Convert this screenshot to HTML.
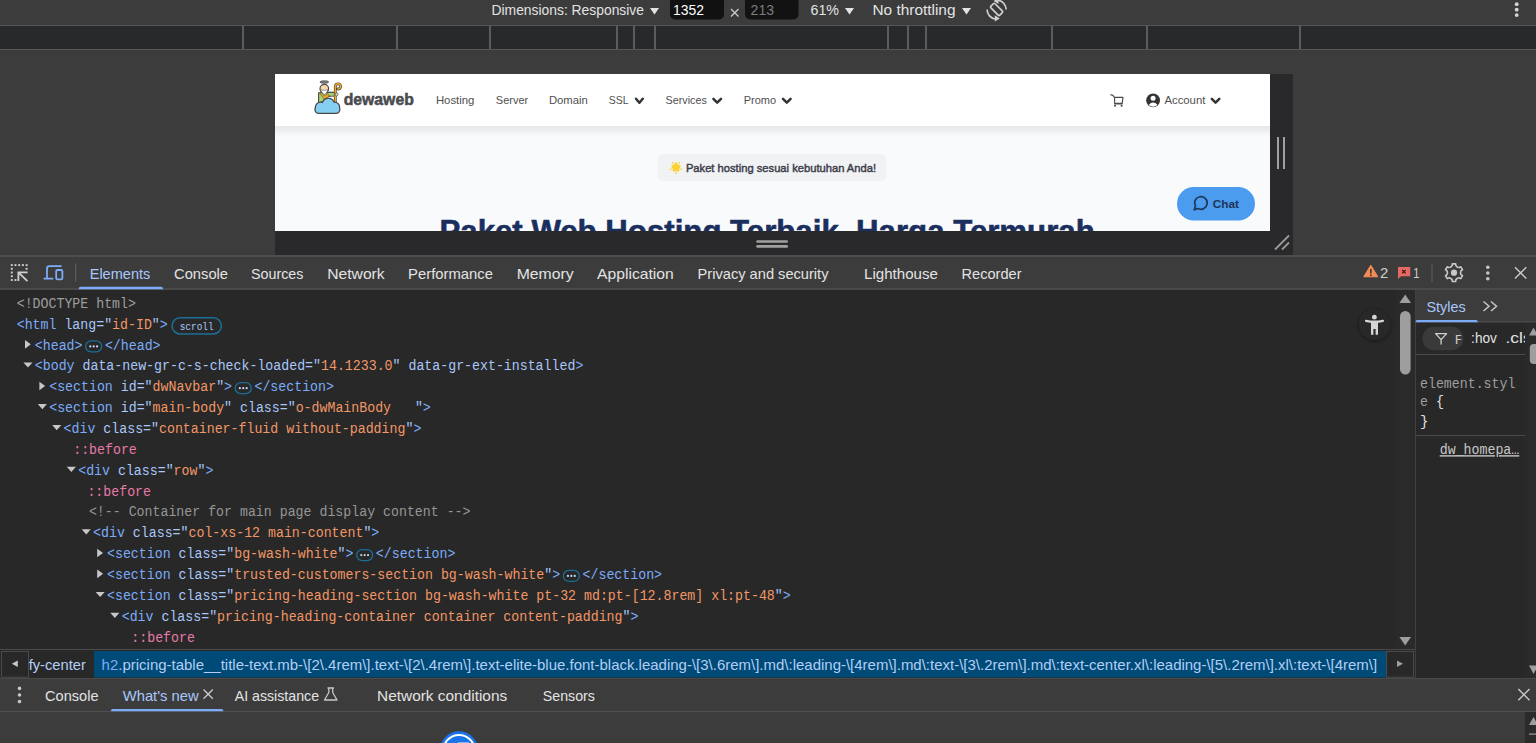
<!DOCTYPE html>
<html><head><meta charset="utf-8"><title>DevTools</title>
<style>
html,body{margin:0;padding:0;background:#3c3c3c;width:1536px;height:743px;overflow:hidden}
svg{display:block}
.S{font-family:"Liberation Sans", sans-serif}
.M{font-family:"Liberation Mono", monospace}
</style></head><body>
<svg width="1536" height="743" viewBox="0 0 1536 743">
<rect x="0" y="0" width="1536" height="25" fill="#3c3c3c" rx="0" />
<rect x="0" y="25" width="1536" height="1" fill="#565656" rx="0" />
<text class="S" x="491.5" y="15.2" font-size="14.5" fill="#e3e3e3" textLength="152.5" lengthAdjust="spacingAndGlyphs" >Dimensions: Responsive</text>
<path d="M650 8 L659 8 L654.5 14.6 Z" fill="#e3e3e3"/>
<rect x="670" y="-6" width="54" height="25.5" fill="#111111" rx="5" />
<text class="S" x="673" y="15.2" font-size="14.5" fill="#ffffff" textLength="31" lengthAdjust="spacingAndGlyphs" >1352</text>
<path d="M731 9 L738.5 16.5 M738.5 9 L731 16.5" stroke="#c8c8c8" stroke-width="1.4"/>
<rect x="745" y="-6" width="53.5" height="25.5" fill="#121212" rx="5" />
<text class="S" x="750.6" y="15.2" font-size="14.5" fill="#7d7d7d" textLength="23.5" lengthAdjust="spacingAndGlyphs" >213</text>
<text class="S" x="810.5" y="15.2" font-size="14.5" fill="#e3e3e3" textLength="28.5" lengthAdjust="spacingAndGlyphs" >61%</text>
<path d="M845 8 L854 8 L849.5 14.6 Z" fill="#e3e3e3"/>
<text class="S" x="872.5" y="15.2" font-size="14.5" fill="#e3e3e3" textLength="83" lengthAdjust="spacingAndGlyphs" >No throttling</text>
<path d="M962 8 L971 8 L966.5 14.6 Z" fill="#e3e3e3"/>
<g fill="none" stroke="#d0d0d0" stroke-width="1.7"><rect x="-2.9" y="-6.3" width="5.8" height="12.6" rx="1.2" transform="translate(996.6,9.4) rotate(-45)"/><path d="M998.2 0.2 A9.5 9.5 0 0 1 1006.1 9.6"/><path d="M987.1 9.6 A9.5 9.5 0 0 0 995.4 19"/></g><path d="M993.6 1.0 L998.4 -2.2 L998.6 4.0 Z M999.8 18.4 L994.8 15.2 L994.8 21.4 Z" fill="#d0d0d0"/>
<circle cx="1516.7" cy="4.2" r="1.9" fill="#d6d6d6"/>
<circle cx="1516.7" cy="9.7" r="1.9" fill="#d6d6d6"/>
<circle cx="1516.7" cy="15.1" r="1.9" fill="#d6d6d6"/>
<rect x="0" y="26" width="1536" height="23" fill="#28292b" rx="0" />
<rect x="0" y="49" width="1536" height="1" fill="#565656" rx="0" />
<rect x="242" y="26" width="2" height="23" fill="#5c5c5c" rx="0" />
<rect x="396" y="26" width="2" height="23" fill="#5c5c5c" rx="0" />
<rect x="489" y="26" width="2" height="23" fill="#5c5c5c" rx="0" />
<rect x="616" y="26" width="2" height="23" fill="#5c5c5c" rx="0" />
<rect x="633" y="26" width="2" height="23" fill="#5c5c5c" rx="0" />
<rect x="654" y="26" width="2" height="23" fill="#5c5c5c" rx="0" />
<rect x="887" y="26" width="2" height="23" fill="#5c5c5c" rx="0" />
<rect x="907" y="26" width="2" height="23" fill="#5c5c5c" rx="0" />
<rect x="925" y="26" width="2" height="23" fill="#5c5c5c" rx="0" />
<rect x="1051" y="26" width="2" height="23" fill="#5c5c5c" rx="0" />
<rect x="1146" y="26" width="2" height="23" fill="#5c5c5c" rx="0" />
<rect x="1299" y="26" width="2" height="23" fill="#5c5c5c" rx="0" />
<rect x="0" y="50" width="1536" height="206" fill="#3c3c3c" rx="0" />
<rect x="1270" y="74" width="23" height="181" fill="#29292b" rx="0" />
<rect x="275" y="231" width="1018" height="24" fill="#29292b" rx="0" />
<rect x="1277" y="137" width="2" height="32" fill="#a0a0a0" rx="0" />
<rect x="1283" y="137" width="2" height="32" fill="#a0a0a0" rx="0" />
<rect x="756.2" y="240.2" width="31.8" height="2.6" fill="#a0a0a0" rx="1.3" />
<rect x="756.2" y="245.1" width="31.8" height="2.6" fill="#a0a0a0" rx="1.3" />
<path d="M1275 249.5 L1289 235.5 M1282 249.5 L1289 242.5" stroke="#9a9a9a" stroke-width="1.8"/>
<svg x="275" y="74" width="995" height="157" overflow="hidden"><g transform="translate(-275,-74)">
<rect x="275" y="74" width="995" height="157" fill="#f9fafb"/>
<rect x="275" y="74" width="995" height="52" fill="#ffffff"/>
<defs><linearGradient id="nsh" x1="0" y1="0" x2="0" y2="1"><stop offset="0" stop-color="#e6e7e9"/><stop offset="0.25" stop-color="#eaebed"/><stop offset="1" stop-color="#f8f9fb"/></linearGradient></defs>
<rect x="275" y="126" width="995" height="10" fill="url(#nsh)"/>
<g stroke-linejoin="round"><ellipse cx="324.3" cy="82" rx="4.4" ry="1.25" fill="#7a7a7a" stroke="#5a5a5a" stroke-width="0.8"/><path d="M318.6 92.8 L327.5 92.2 L334.5 92.4 L334.5 96 L327 96.4 L323 101.5 L318.6 103 Z" fill="#a6d56a" stroke="#4a4a4a" stroke-width="1.1"/><path d="M335.3 104.6 V86.4 a2.6 2.6 0 1 1 2.6 2.6" fill="none" stroke="#4a4a4a" stroke-width="2.8" stroke-linecap="round"/><path d="M335.3 104.6 V86.4 a2.6 2.6 0 1 1 2.6 2.6" fill="none" stroke="#f2a81d" stroke-width="1.4" stroke-linecap="round"/><circle cx="336.6" cy="94.4" r="1.5" fill="#f7d9b0" stroke="#4a4a4a" stroke-width="0.7"/><path d="M319.8 93 L324.5 99.5 L329.5 96 L327.6 93.6 L324.4 96 L321.4 92.6 Z" fill="#f2a81d" stroke="#4a4a4a" stroke-width="0.6"/><circle cx="324.3" cy="88.7" r="4.3" fill="#f7d9b0" stroke="#4a4a4a" stroke-width="1.2"/><path d="M320.6 89.6 Q324.3 99 328 89.6 Q324.3 91.2 320.6 89.6 Z" fill="#ffffff" stroke="#5a5a5a" stroke-width="0.6"/></g>
<g fill="#4a4a4a" stroke="#4a4a4a" stroke-width="2.6"><circle cx="320.6" cy="107.4" r="4.6"/><circle cx="328.3" cy="104.4" r="5.6"/><circle cx="334.6" cy="107.2" r="4.4"/><rect x="315.6" y="106.5" width="23.6" height="6.2" rx="3.1"/></g>
<g fill="#85cff3"><circle cx="320.6" cy="107.4" r="4.6"/><circle cx="328.3" cy="104.4" r="5.6"/><circle cx="334.6" cy="107.2" r="4.4"/><rect x="315.6" y="106.5" width="23.6" height="6.2" rx="3.1"/></g>
<text stroke="#4a4b4f" stroke-width="0.55" class="S" x="343.70" y="105.20" font-size="16.5" fill="#4a4b4f" font-weight="700" textLength="70.10" lengthAdjust="spacingAndGlyphs" style="white-space:pre">dewaweb</text>
<text class="S" x="435.90" y="103.90" font-size="11.5" fill="#505050" textLength="38.50" lengthAdjust="spacingAndGlyphs" style="white-space:pre">Hosting</text>
<text class="S" x="495.80" y="103.90" font-size="11.5" fill="#505050" textLength="32.40" lengthAdjust="spacingAndGlyphs" style="white-space:pre">Server</text>
<text class="S" x="548.90" y="103.90" font-size="11.5" fill="#505050" textLength="39.00" lengthAdjust="spacingAndGlyphs" style="white-space:pre">Domain</text>
<text class="S" x="608.70" y="103.90" font-size="11.5" fill="#505050" textLength="19.80" lengthAdjust="spacingAndGlyphs" style="white-space:pre">SSL</text>
<text class="S" x="665.60" y="103.90" font-size="11.5" fill="#505050" textLength="41.20" lengthAdjust="spacingAndGlyphs" style="white-space:pre">Services</text>
<text class="S" x="743.70" y="103.90" font-size="11.5" fill="#505050" textLength="32.40" lengthAdjust="spacingAndGlyphs" style="white-space:pre">Promo</text>
<path d="M636.00 98.80 L639.40 102.70 L642.80 98.80" fill="none" stroke="#333" stroke-width="2.5" stroke-linecap="round" stroke-linejoin="round"/>
<path d="M713.40 98.80 L717.20 102.70 L721.00 98.80" fill="none" stroke="#333" stroke-width="2.5" stroke-linecap="round" stroke-linejoin="round"/>
<path d="M783.00 98.80 L786.80 102.70 L790.60 98.80" fill="none" stroke="#333" stroke-width="2.5" stroke-linecap="round" stroke-linejoin="round"/>
<g fill="none" stroke="#4a4a4a" stroke-width="1.15" stroke-linejoin="round" stroke-linecap="round"><path d="M1110.6 94.8 l2.3 0.6 l1.6 2 h8.5 l-0.8 5.8 h-7.2 M1114.5 97.4 l0.2 6.4 h7.6"/></g><circle cx="1115" cy="105.7" r="1.05" fill="#4a4a4a"/><circle cx="1121.6" cy="105.7" r="1.05" fill="#4a4a4a"/>
<circle cx="1153.1" cy="100.3" r="6.9" fill="#333333"/><circle cx="1153.1" cy="98.3" r="2.5" fill="#ffffff"/><path d="M1148.6 104.9 q4.5 -4.8 9 0 q-4.5 3.6 -9 0 Z" fill="#ffffff"/>
<text class="S" x="1164.40" y="104.00" font-size="11.5" fill="#505050" textLength="41.00" lengthAdjust="spacingAndGlyphs" style="white-space:pre">Account</text>
<path d="M1211.80 98.80 L1215.55 102.70 L1219.30 98.80" fill="none" stroke="#333" stroke-width="2.5" stroke-linecap="round" stroke-linejoin="round"/>
<rect x="657.8" y="154.3" width="228.5" height="26.6" rx="5" fill="#f1f2f4"/>
<polygon points="676.00,163.00 677.76,164.97 680.18,166.04 678.85,168.33 678.59,170.96 676.00,170.40 673.41,170.96 673.15,168.33 671.82,166.04 674.24,164.97" fill="#fcd232" stroke="#fcd232" stroke-width="1.2" stroke-linejoin="round"/>
<circle cx="679.29" cy="162.87" r="0.9" fill="#fcd232"/>
<circle cx="681.33" cy="169.13" r="0.9" fill="#fcd232"/>
<circle cx="676.00" cy="173.00" r="0.9" fill="#fcd232"/>
<circle cx="670.67" cy="169.13" r="0.9" fill="#fcd232"/>
<circle cx="672.71" cy="162.87" r="0.9" fill="#fcd232"/>
<text stroke="#3b3d4a" stroke-width="0.45" class="S" x="685.90" y="171.70" font-size="11.8" fill="#3b3d4a" textLength="190.20" lengthAdjust="spacingAndGlyphs" style="white-space:pre">Paket hosting sesuai kebutuhan Anda!</text>
<rect x="1177" y="187" width="78" height="33.5" rx="16.75" fill="#4b9bef"/>
<g fill="none" stroke="#1d3557" stroke-width="1.7" stroke-linejoin="round"><path d="M1194.2 209.8 l1.3 -3.6 a6.3 6.3 0 1 1 2.6 2.4 Z"/></g>
<text class="S" x="1212.80" y="208.20" font-size="11.5" fill="#1d3557" font-weight="700" textLength="26.20" lengthAdjust="spacingAndGlyphs" style="white-space:pre">Chat</text>
<text stroke="#1b2f5e" stroke-width="0.6" class="S" x="439.50" y="242.00" font-size="31" fill="#1b2f5e" font-weight="700" textLength="655.20" lengthAdjust="spacingAndGlyphs" style="white-space:pre">Paket Web Hosting Terbaik, Harga Termurah</text>
</g></svg>
<rect x="0" y="255" width="1536" height="2" fill="#4d4d4d" rx="0" />
<rect x="0" y="257" width="1536" height="31" fill="#3c3c3c" rx="0" />
<rect x="0" y="288" width="1536" height="2" fill="#4a4a4a" rx="0" />
<g fill="#cfcfcf"><rect x="10.85" y="264.15" width="1.9" height="1.9"/><rect x="14.55" y="264.15" width="1.9" height="1.9"/><rect x="18.25" y="264.15" width="1.9" height="1.9"/><rect x="21.95" y="264.15" width="1.9" height="1.9"/><rect x="25.65" y="264.15" width="1.9" height="1.9"/><rect x="10.85" y="267.85" width="1.9" height="1.9"/><rect x="10.85" y="271.55" width="1.9" height="1.9"/><rect x="10.85" y="275.25" width="1.9" height="1.9"/><rect x="10.85" y="279.05" width="1.9" height="1.9"/><rect x="14.55" y="279.05" width="1.9" height="1.9"/><rect x="25.65" y="267.85" width="1.9" height="1.9"/></g>
<path d="M18.4 281 V272.3 H27.6 M18.9 272.8 L27.4 281.2" fill="none" stroke="#cfcfcf" stroke-width="1.8"/>
<g fill="none" stroke="#7cacf8" stroke-width="1.8"><path d="M43.6 278.6 H53.2 M47 278.6 V268.6 a2.4 2.4 0 0 1 2.4 -2.4 H61.6"/><rect x="56.2" y="270" width="6.2" height="9.3" rx="1.3"/></g>
<rect x="75" y="263.5" width="1.2" height="18" fill="#5a5a5a"/>
<text class="S" x="89.70" y="278.80" font-size="14.5" fill="#a8c7fa" textLength="60.60" lengthAdjust="spacingAndGlyphs" style="white-space:pre" >Elements</text>
<text class="S" x="174.10" y="278.80" font-size="14.5" fill="#e3e3e3" textLength="53.90" lengthAdjust="spacingAndGlyphs" style="white-space:pre" >Console</text>
<text class="S" x="251.10" y="278.80" font-size="14.5" fill="#e3e3e3" textLength="52.30" lengthAdjust="spacingAndGlyphs" style="white-space:pre" >Sources</text>
<text class="S" x="327.20" y="278.80" font-size="14.5" fill="#e3e3e3" textLength="57.50" lengthAdjust="spacingAndGlyphs" style="white-space:pre" >Network</text>
<text class="S" x="408.10" y="278.80" font-size="14.5" fill="#e3e3e3" textLength="84.80" lengthAdjust="spacingAndGlyphs" style="white-space:pre" >Performance</text>
<text class="S" x="516.70" y="278.80" font-size="14.5" fill="#e3e3e3" textLength="57.00" lengthAdjust="spacingAndGlyphs" style="white-space:pre" >Memory</text>
<text class="S" x="597.10" y="278.80" font-size="14.5" fill="#e3e3e3" textLength="76.70" lengthAdjust="spacingAndGlyphs" style="white-space:pre" >Application</text>
<text class="S" x="697.60" y="278.80" font-size="14.5" fill="#e3e3e3" textLength="130.90" lengthAdjust="spacingAndGlyphs" style="white-space:pre" >Privacy and security</text>
<text class="S" x="864.10" y="278.80" font-size="14.5" fill="#e3e3e3" textLength="73.70" lengthAdjust="spacingAndGlyphs" style="white-space:pre" >Lighthouse</text>
<text class="S" x="961.60" y="278.80" font-size="14.5" fill="#e3e3e3" textLength="59.90" lengthAdjust="spacingAndGlyphs" style="white-space:pre" >Recorder</text>
<path d="M78.7 289.3 v-0.6 a2 2 0 0 1 2 -2 h80.3 a2 2 0 0 1 2 2 v0.6 Z" fill="#7cacf8"/>
<path d="M1370.8 265.2 L1377.9 276.8 L1363.7 276.8 Z" fill="#f28b54" stroke="#f28b54" stroke-width="1" stroke-linejoin="round"/>
<rect x="1370" y="269" width="1.6" height="4.6" fill="#3c3c3c"/><rect x="1370" y="274.4" width="1.6" height="1.6" fill="#3c3c3c"/>
<text class="S" x="1380.10" y="277.60" font-size="14" fill="#cfcfcf" textLength="8.30" lengthAdjust="spacingAndGlyphs" style="white-space:pre" >2</text>
<path d="M1398 267 h12.2 v9.2 h-9 l-3.2 2.6 Z" fill="#e46962"/>
<path d="M1402.2 270 l3.4 3.4 M1405.6 270 l-3.4 3.4" stroke="#3c1614" stroke-width="1.2"/>
<text class="S" x="1413.30" y="278.00" font-size="14" fill="#cfcfcf" textLength="6.20" lengthAdjust="spacingAndGlyphs" style="white-space:pre" >1</text>
<rect x="1431.4" y="264" width="1.2" height="18" fill="#5a5a5a"/>
<polygon points="1451.11,266.77 1452.21,265.52 1452.28,263.87 1455.72,263.87 1455.79,265.52 1456.89,266.77 1457.69,267.23 1459.32,267.56 1460.79,266.80 1462.51,269.77 1461.11,270.66 1460.58,272.24 1460.58,273.16 1461.11,274.74 1462.51,275.63 1460.79,278.60 1459.32,277.84 1457.69,278.17 1456.89,278.63 1455.79,279.88 1455.72,281.53 1452.28,281.53 1452.21,279.88 1451.11,278.63 1450.31,278.17 1448.68,277.84 1447.21,278.60 1445.49,275.63 1446.89,274.74 1447.42,273.16 1447.42,272.24 1446.89,270.66 1445.49,269.77 1447.21,266.80 1448.68,267.56 1450.31,267.23" fill="none" stroke="#c7c7c7" stroke-width="1.6" stroke-linejoin="round"/>
<circle cx="1454" cy="272.7" r="3.1" fill="#c7c7c7"/>
<circle cx="1487.8" cy="267.2" r="1.8" fill="#c7c7c7"/>
<circle cx="1487.8" cy="273.0" r="1.8" fill="#c7c7c7"/>
<circle cx="1487.8" cy="278.8" r="1.8" fill="#c7c7c7"/>
<path d="M1515 267.2 L1526.3 278.5 M1526.3 267.2 L1515 278.5" stroke="#c7c7c7" stroke-width="1.5"/>
<rect x="0" y="290" width="1415" height="360" fill="#282828" rx="0" />
<text class="M" x="16.70" y="307.80" font-size="14" textLength="119.25" lengthAdjust="spacingAndGlyphs" style="white-space:pre"><tspan fill="#9e9e9e">&lt;!DOCTYPE html&gt;</tspan></text>
<text class="M" x="16.70" y="328.67" font-size="14" textLength="151.05" lengthAdjust="spacingAndGlyphs" style="white-space:pre"><tspan fill="#7cacf8">&lt;html</tspan><tspan fill="#a8c7fa"> lang</tspan><tspan fill="#a8c7fa">=&quot;</tspan><tspan fill="#f29766">id-ID</tspan><tspan fill="#a8c7fa">&quot;</tspan><tspan fill="#7cacf8">&gt;</tspan></text>
<rect x="172.05" y="317.77" width="49.3" height="16.2" rx="8.1" fill="none" stroke="#1b6e94" stroke-width="1.5"/>
<text class="M" x="179.65" y="329.67" font-size="10" fill="#a8c7fa" textLength="34" lengthAdjust="spacingAndGlyphs">scroll</text>
<text class="M" x="34.80" y="349.53" font-size="14" textLength="47.70" lengthAdjust="spacingAndGlyphs" style="white-space:pre"><tspan fill="#7cacf8">&lt;head&gt;</tspan></text>
<path d="M25.00 340.03 L30.80 344.33 L25.00 348.63 Z" fill="#c7c7c7"/>
<rect x="85.70" y="340.93" width="16" height="11" rx="5.5" fill="none" stroke="#1b6e94" stroke-width="1.3"/>
<circle cx="90.30" cy="346.43" r="1.1" fill="#c8d8f0"/>
<circle cx="93.70" cy="346.43" r="1.1" fill="#c8d8f0"/>
<circle cx="97.10" cy="346.43" r="1.1" fill="#c8d8f0"/>
<text class="M" x="104.90" y="349.53" font-size="14" textLength="55.65" lengthAdjust="spacingAndGlyphs" style="white-space:pre"><tspan fill="#7cacf8">&lt;/head&gt;</tspan></text>
<text class="M" x="34.80" y="370.39" font-size="14" textLength="548.55" lengthAdjust="spacingAndGlyphs" style="white-space:pre"><tspan fill="#7cacf8">&lt;body</tspan><tspan fill="#a8c7fa"> data-new-gr-c-s-check-loaded</tspan><tspan fill="#a8c7fa">=&quot;</tspan><tspan fill="#f29766">14.1233.0</tspan><tspan fill="#a8c7fa">&quot;</tspan><tspan fill="#a8c7fa"> data-gr-ext-installed</tspan><tspan fill="#7cacf8">&gt;</tspan></text>
<path d="M23.40 362.39 L32.50 362.39 L27.95 367.60 Z" fill="#c7c7c7"/>
<text class="M" x="49.20" y="391.26" font-size="14" textLength="182.85" lengthAdjust="spacingAndGlyphs" style="white-space:pre"><tspan fill="#7cacf8">&lt;section</tspan><tspan fill="#a8c7fa"> id</tspan><tspan fill="#a8c7fa">=&quot;</tspan><tspan fill="#f29766">dwNavbar</tspan><tspan fill="#a8c7fa">&quot;</tspan><tspan fill="#7cacf8">&gt;</tspan></text>
<path d="M39.40 381.76 L45.20 386.06 L39.40 390.36 Z" fill="#c7c7c7"/>
<rect x="235.25" y="382.66" width="16" height="11" rx="5.5" fill="none" stroke="#1b6e94" stroke-width="1.3"/>
<circle cx="239.85" cy="388.16" r="1.1" fill="#c8d8f0"/>
<circle cx="243.25" cy="388.16" r="1.1" fill="#c8d8f0"/>
<circle cx="246.65" cy="388.16" r="1.1" fill="#c8d8f0"/>
<text class="M" x="254.45" y="391.26" font-size="14" textLength="79.50" lengthAdjust="spacingAndGlyphs" style="white-space:pre"><tspan fill="#7cacf8">&lt;/section&gt;</tspan></text>
<text class="M" x="49.20" y="412.12" font-size="14" textLength="381.60" lengthAdjust="spacingAndGlyphs" style="white-space:pre"><tspan fill="#7cacf8">&lt;section</tspan><tspan fill="#a8c7fa"> id</tspan><tspan fill="#a8c7fa">=&quot;</tspan><tspan fill="#f29766">main-body</tspan><tspan fill="#a8c7fa">&quot;</tspan><tspan fill="#a8c7fa"> class</tspan><tspan fill="#a8c7fa">=&quot;</tspan><tspan fill="#f29766">o-dwMainBody   </tspan><tspan fill="#a8c7fa">&quot;</tspan><tspan fill="#7cacf8">&gt;</tspan></text>
<path d="M37.80 404.12 L46.90 404.12 L42.35 409.33 Z" fill="#c7c7c7"/>
<text class="M" x="63.60" y="432.99" font-size="14" textLength="357.75" lengthAdjust="spacingAndGlyphs" style="white-space:pre"><tspan fill="#7cacf8">&lt;div</tspan><tspan fill="#a8c7fa"> class</tspan><tspan fill="#a8c7fa">=&quot;</tspan><tspan fill="#f29766">container-fluid without-padding</tspan><tspan fill="#a8c7fa">&quot;</tspan><tspan fill="#7cacf8">&gt;</tspan></text>
<path d="M52.20 424.99 L61.30 424.99 L56.75 430.19 Z" fill="#c7c7c7"/>
<text class="M" x="73.20" y="453.86" font-size="14" textLength="63.60" lengthAdjust="spacingAndGlyphs" style="white-space:pre"><tspan fill="#e67aa8">::before</tspan></text>
<text class="M" x="78.20" y="474.72" font-size="14" textLength="135.15" lengthAdjust="spacingAndGlyphs" style="white-space:pre"><tspan fill="#7cacf8">&lt;div</tspan><tspan fill="#a8c7fa"> class</tspan><tspan fill="#a8c7fa">=&quot;</tspan><tspan fill="#f29766">row</tspan><tspan fill="#a8c7fa">&quot;</tspan><tspan fill="#7cacf8">&gt;</tspan></text>
<path d="M66.80 466.72 L75.90 466.72 L71.35 471.92 Z" fill="#c7c7c7"/>
<text class="M" x="87.40" y="495.59" font-size="14" textLength="63.60" lengthAdjust="spacingAndGlyphs" style="white-space:pre"><tspan fill="#e67aa8">::before</tspan></text>
<text class="M" x="88.90" y="516.45" font-size="14" textLength="381.60" lengthAdjust="spacingAndGlyphs" style="white-space:pre"><tspan fill="#969696">&lt;!-- Container for main page display content --&gt;</tspan></text>
<text class="M" x="93.10" y="537.32" font-size="14" textLength="286.20" lengthAdjust="spacingAndGlyphs" style="white-space:pre"><tspan fill="#7cacf8">&lt;div</tspan><tspan fill="#a8c7fa"> class</tspan><tspan fill="#a8c7fa">=&quot;</tspan><tspan fill="#f29766">col-xs-12 main-content</tspan><tspan fill="#a8c7fa">&quot;</tspan><tspan fill="#7cacf8">&gt;</tspan></text>
<path d="M81.70 529.32 L90.80 529.32 L86.25 534.52 Z" fill="#c7c7c7"/>
<text class="M" x="107.00" y="558.18" font-size="14" textLength="246.45" lengthAdjust="spacingAndGlyphs" style="white-space:pre"><tspan fill="#7cacf8">&lt;section</tspan><tspan fill="#a8c7fa"> class</tspan><tspan fill="#a8c7fa">=&quot;</tspan><tspan fill="#f29766">bg-wash-white</tspan><tspan fill="#a8c7fa">&quot;</tspan><tspan fill="#7cacf8">&gt;</tspan></text>
<path d="M97.20 548.68 L103.00 552.98 L97.20 557.28 Z" fill="#c7c7c7"/>
<rect x="356.65" y="549.58" width="16" height="11" rx="5.5" fill="none" stroke="#1b6e94" stroke-width="1.3"/>
<circle cx="361.25" cy="555.08" r="1.1" fill="#c8d8f0"/>
<circle cx="364.65" cy="555.08" r="1.1" fill="#c8d8f0"/>
<circle cx="368.05" cy="555.08" r="1.1" fill="#c8d8f0"/>
<text class="M" x="375.85" y="558.18" font-size="14" textLength="79.50" lengthAdjust="spacingAndGlyphs" style="white-space:pre"><tspan fill="#7cacf8">&lt;/section&gt;</tspan></text>
<text class="M" x="107.00" y="579.05" font-size="14" textLength="453.15" lengthAdjust="spacingAndGlyphs" style="white-space:pre"><tspan fill="#7cacf8">&lt;section</tspan><tspan fill="#a8c7fa"> class</tspan><tspan fill="#a8c7fa">=&quot;</tspan><tspan fill="#f29766">trusted-customers-section bg-wash-white</tspan><tspan fill="#a8c7fa">&quot;</tspan><tspan fill="#7cacf8">&gt;</tspan></text>
<path d="M97.20 569.55 L103.00 573.85 L97.20 578.14 Z" fill="#c7c7c7"/>
<rect x="563.35" y="570.45" width="16" height="11" rx="5.5" fill="none" stroke="#1b6e94" stroke-width="1.3"/>
<circle cx="567.95" cy="575.95" r="1.1" fill="#c8d8f0"/>
<circle cx="571.35" cy="575.95" r="1.1" fill="#c8d8f0"/>
<circle cx="574.75" cy="575.95" r="1.1" fill="#c8d8f0"/>
<text class="M" x="582.55" y="579.05" font-size="14" textLength="79.50" lengthAdjust="spacingAndGlyphs" style="white-space:pre"><tspan fill="#7cacf8">&lt;/section&gt;</tspan></text>
<text class="M" x="107.00" y="599.91" font-size="14" textLength="683.70" lengthAdjust="spacingAndGlyphs" style="white-space:pre"><tspan fill="#7cacf8">&lt;section</tspan><tspan fill="#a8c7fa"> class</tspan><tspan fill="#a8c7fa">=&quot;</tspan><tspan fill="#f29766">pricing-heading-section bg-wash-white pt-32 md:pt-[12.8rem] xl:pt-48</tspan><tspan fill="#a8c7fa">&quot;</tspan><tspan fill="#7cacf8">&gt;</tspan></text>
<path d="M95.60 591.91 L104.70 591.91 L100.15 597.11 Z" fill="#c7c7c7"/>
<text class="M" x="121.70" y="620.77" font-size="14" textLength="516.75" lengthAdjust="spacingAndGlyphs" style="white-space:pre"><tspan fill="#7cacf8">&lt;div</tspan><tspan fill="#a8c7fa"> class</tspan><tspan fill="#a8c7fa">=&quot;</tspan><tspan fill="#f29766">pricing-heading-container container content-padding</tspan><tspan fill="#a8c7fa">&quot;</tspan><tspan fill="#7cacf8">&gt;</tspan></text>
<path d="M110.30 612.77 L119.40 612.77 L114.85 617.98 Z" fill="#c7c7c7"/>
<text class="M" x="131.30" y="641.64" font-size="14" textLength="63.60" lengthAdjust="spacingAndGlyphs" style="white-space:pre"><tspan fill="#e67aa8">::before</tspan></text>
<rect x="1414" y="290" width="2" height="388" fill="#404040" rx="0" />
<rect x="1416" y="290" width="120" height="388" fill="#282828" rx="0" />
<rect x="1416" y="290" width="120" height="31" fill="#3c3c3c"/>
<rect x="1416" y="321" width="120" height="1.5" fill="#4a4a4a"/>
<text class="S" x="1426.40" y="311.90" font-size="14.5" fill="#a8c7fa" textLength="39.30" lengthAdjust="spacingAndGlyphs" style="white-space:pre" >Styles</text>
<path d="M1415.5 322.3 v-0.5 a1.8 1.8 0 0 1 1.8 -1.8 h58.7 a1.8 1.8 0 0 1 1.8 1.8 v0.5 Z" fill="#7cacf8"/>
<path d="M1483.5 301.5 L1489 306.3 L1483.5 311 M1491 301.5 L1496.5 306.3 L1491 311" fill="none" stroke="#c7c7c7" stroke-width="1.5"/>
<rect x="1422.3" y="326.8" width="41.1" height="23.4" rx="11.7" fill="#3a3a3a"/>
<path d="M1435.6 333.6 H1446.6 L1441.1 339.6 Z M1441.1 339.6 V344.6" fill="none" stroke="#d0d0d0" stroke-width="1.3" stroke-linejoin="round"/>
<svg x="1450" y="326" width="11.2" height="24" overflow="hidden"><text class="S" x="4.80" y="17.60" font-size="13.5" fill="#c7c7c7" textLength="8.70" lengthAdjust="spacingAndGlyphs" style="white-space:pre" >F</text></svg>
<text class="S" x="1471.10" y="342.70" font-size="14" fill="#e3e3e3" textLength="25.80" lengthAdjust="spacingAndGlyphs" style="white-space:pre" >:hov</text>
<svg x="1416" y="323" width="109" height="40" overflow="hidden">
<text class="S" x="89.50" y="19.70" font-size="14" fill="#e3e3e3" textLength="26.20" lengthAdjust="spacingAndGlyphs" style="white-space:pre" >.cls</text>
</svg>
<rect x="1416" y="354" width="109" height="1" fill="#4a4a4a"/>
<svg x="1416" y="355" width="109" height="80" overflow="hidden">
<text class="M" x="4" y="33.3" font-size="14" fill="#9e9e9e" textLength="95.4" lengthAdjust="spacingAndGlyphs">element.styl</text>
<text class="M" x="4" y="50.9" font-size="14" fill="#9e9e9e" textLength="23.85" lengthAdjust="spacingAndGlyphs" style="white-space:pre">e <tspan fill="#e3e3e3">{</tspan></text>
<text class="M" x="4" y="71.2" font-size="14" fill="#e3e3e3">}</text>
</svg>
<rect x="1416" y="435" width="109" height="1" fill="#4a4a4a"/>
<text class="M" x="1439.7" y="454.2" font-size="14" fill="#c7c7c7" textLength="79.6" lengthAdjust="spacingAndGlyphs" text-decoration="underline">dw_homepa…</text>
<rect x="1525" y="323" width="11" height="355" fill="#2a2a2a"/>
<path d="M1533.5 327.5 L1538 335.5 L1529 335.5 Z" fill="#9e9e9e"/>
<rect x="1529.8" y="344" width="10" height="20" rx="4" fill="#9e9e9e"/>
<path d="M1529 665.6 L1538 665.6 L1533.5 674 Z" fill="#9e9e9e"/>
<rect x="1396" y="290" width="19" height="359" fill="#2a2a2a"/>
<path d="M1405.2 294.5 L1411 303 L1399.4 303 Z" fill="#9e9e9e"/>
<rect x="1400" y="311" width="10.6" height="63.6" rx="5.3" fill="#9e9e9e"/>
<path d="M1399.4 637 L1411 637 L1405.2 645.5 Z" fill="#9e9e9e"/>
<defs><filter id="ash" x="-50%" y="-50%" width="200%" height="200%"><feGaussianBlur stdDeviation="1.2"/></filter></defs>
<circle cx="1374.7" cy="325.4" r="16.2" fill="#1c1c1c" filter="url(#ash)"/>
<circle cx="1374.7" cy="324.4" r="15.8" fill="#282828"/>
<circle cx="1374.4" cy="317.2" r="2.4" fill="#d6d6d6"/>
<path d="M1366 320.8 Q1374.4 322.6 1383 320.8" stroke="#d6d6d6" stroke-width="2.2" fill="none" stroke-linecap="round"/>
<path d="M1371 321.5 h7 v13.2 h-2.4 v-5.6 h-2.2 v5.6 h-2.4 Z" fill="#d6d6d6"/>
<rect x="0" y="649" width="1415" height="1" fill="#4a4a4a" rx="0" />
<rect x="0" y="650" width="1415" height="28" fill="#282828" rx="0" />
<rect x="1.5" y="651.5" width="27" height="25.7" fill="#282828" stroke="#4a4a4a" stroke-width="1"/>
<path d="M17.8 660.6 L17.8 667 L11.8 663.8 Z" fill="#c7c7c7"/>
<text class="S" x="28.70" y="669.80" font-size="15" fill="#b4cff5" textLength="57.20" lengthAdjust="spacingAndGlyphs" style="white-space:pre" >fy-center</text>
<rect x="94" y="651" width="1292" height="26.5" fill="#004a77"/>
<text class="S" x="101.6" y="669.6" font-size="15" fill="#b2cef6" textLength="1275.5" lengthAdjust="spacingAndGlyphs"><tspan fill="#7cacf8">h2</tspan>.pricing-table__title-text.mb-\[2\.4rem\].text-\[2\.4rem\].text-elite-blue.font-black.leading-\[3\.6rem\].md\:leading-\[4rem\].md\:text-\[3\.2rem\].md\:text-center.xl\:leading-\[5\.2rem\].xl\:text-\[4rem\]</text>
<rect x="1386.5" y="651.5" width="27" height="25.7" fill="#282828" stroke="#4a4a4a" stroke-width="1"/>
<path d="M1397 660.6 L1397 667 L1403 663.8 Z" fill="#9e9e9e"/>
<rect x="0" y="678" width="1536" height="1" fill="#4a4a4a" rx="0" />
<rect x="0" y="679" width="1536" height="32" fill="#3c3c3c" rx="0" />
<rect x="0" y="711" width="1536" height="1" fill="#4f4f4f" rx="0" />
<rect x="0" y="712" width="1536" height="31" fill="#3c3c3c" rx="0" />
<circle cx="19.5" cy="688.4" r="1.8" fill="#c7c7c7"/>
<circle cx="19.5" cy="695.0" r="1.8" fill="#c7c7c7"/>
<circle cx="19.5" cy="701.6" r="1.8" fill="#c7c7c7"/>
<text class="S" x="45.10" y="701.00" font-size="14.5" fill="#e3e3e3" textLength="53.40" lengthAdjust="spacingAndGlyphs" style="white-space:pre" >Console</text>
<text class="S" x="122.70" y="701.00" font-size="14.5" fill="#a8c7fa" textLength="76.00" lengthAdjust="spacingAndGlyphs" style="white-space:pre" >What&#x27;s new</text>
<path d="M203.5 689.5 L212.8 698.8 M212.8 689.5 L203.5 698.8" stroke="#c7c7c7" stroke-width="1.4"/>
<path d="M110.9 711.3 v-0.4 a2 2 0 0 1 2 -2 h108.5 a2 2 0 0 1 2 2 v0.4 Z" fill="#7cacf8"/>
<text class="S" x="234.70" y="701.00" font-size="14.5" fill="#e3e3e3" textLength="84.40" lengthAdjust="spacingAndGlyphs" style="white-space:pre" >AI assistance</text>
<path d="M327.5 688 h6.5 M328.8 688 v4.5 l-4.3 7.5 h12.5 l-4.3 -7.5 v-4.5" fill="none" stroke="#c7c7c7" stroke-width="1.3" stroke-linejoin="round"/>
<text class="S" x="377.10" y="701.00" font-size="14.5" fill="#e3e3e3" textLength="130.10" lengthAdjust="spacingAndGlyphs" style="white-space:pre" >Network conditions</text>
<text class="S" x="542.80" y="701.00" font-size="14.5" fill="#e3e3e3" textLength="52.10" lengthAdjust="spacingAndGlyphs" style="white-space:pre" >Sensors</text>
<path d="M1518.3 689 L1529.5 700.3 M1529.5 689 L1518.3 700.3" stroke="#c7c7c7" stroke-width="1.5"/>
<rect x="1525" y="712" width="11" height="31" fill="#2b2b2b"/>
<path d="M1533.5 717 L1538 725 L1529 725 Z" fill="#9e9e9e"/>
<rect x="1529" y="733.5" width="7" height="1.2" fill="#9e9e9e"/>
<circle cx="459" cy="750.5" r="19.2" fill="#1a73e8"/>
<circle cx="459" cy="750.5" r="15.6" fill="none" stroke="#ffffff" stroke-width="2"/>
<rect x="458" y="742" width="11" height="1.2" fill="#8ab4f8"/>
</svg>
</body></html>
